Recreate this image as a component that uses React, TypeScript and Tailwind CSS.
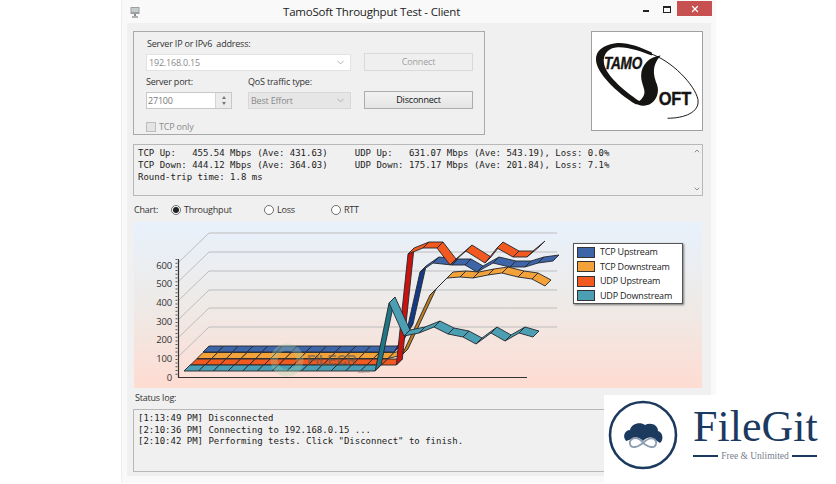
import { ChevronDown, ChevronUp, X } from "lucide-react";

type Pt = [number, number];

// front edge of every ribbon, page coordinates, back to front
const flat = (x0: number, y: number, n: number): Pt[] =>
  Array.from({ length: n + 1 }, (_, i) => [x0 + i * 14.7, y] as Pt);

const series: { name: string; light: string; dark: string; pts: Pt[] }[] = [
  {
    name: "TCP Upstream",
    light: "#3f65a9",
    dark: "#143a86",
    pts: [
      ...flat(203, 352, 13),
      [407, 330], [420, 272], [433, 263], [452, 265], [465, 265], [477, 272],
      [493, 263], [510, 267], [525, 267], [538, 263], [553, 261],
    ],
  },
  {
    name: "TCP Downstream",
    light: "#f3a23a",
    dark: "#bf7d20",
    pts: [
      ...flat(197, 358.5, 13),
      [402, 355], [430, 295], [447, 278], [460, 277], [473, 278], [488, 275],
      [502, 273], [518, 277], [532, 279], [545, 286],
    ],
  },
  {
    name: "UDP Upstream",
    light: "#f1591f",
    dark: "#c8140f",
    pts: [
      ...flat(190.5, 365, 14),
      [408, 254], [423, 248], [437, 248], [450, 265], [466, 251], [485, 263],
      [497, 248], [513, 257], [527, 257], [539, 247],
    ],
  },
  {
    name: "UDP Downstream",
    light: "#4c9fb2",
    dark: "#1f7785",
    pts: [
      ...flat(184, 371, 13),
      [389, 303], [404, 336], [419, 333], [434, 327], [448, 334], [463, 337],
      [476, 344], [491, 333], [505, 341], [519, 333], [533, 337],
    ],
  },
];

const Ribbon = ({ light, dark, pts }: { light: string; dark: string; pts: Pt[] }) => (
  <g stroke="#23272e" strokeWidth={0.9} strokeLinejoin="round">
    {pts.slice(0, -1).map(([x1, y1], i) => {
      const [x2, y2] = pts[i + 1];
      const steep = (y2 - y1) / (x2 - x1) < -1.6;
      return (
        <polygon
          key={i}
          fill={steep ? dark : light}
          points={`${x1},${y1} ${x2},${y2} ${x2 + 6},${y2 - 6} ${x1 + 6},${y1 - 6}`}
        />
      );
    })}
  </g>
);

const Chart = () => {
  const backLines = [233, 252, 271, 290, 308, 327];
  const labels = [
    ["600", 265], ["500", 283.5], ["400", 302], ["300", 321], ["200", 339.5], ["100", 358], ["0", 377],
  ] as const;
  return (
    <svg viewBox="134 222 568 166" className="block w-[568px] h-[166px]">
      {backLines.map((y) => (
        <g key={y} stroke="#bdbdbd" strokeWidth={1} fill="none">
          <path d={`M178 ${y + 30} L209 ${y} H557`} />
        </g>
      ))}
      <path d="M178.5 259 V377.5 H527" stroke="#333" strokeWidth={1.2} fill="none" />
      <path d="M176.5 259 V377" stroke="#555" strokeWidth={2} strokeDasharray="1 2.7" fill="none" />
      {labels.map(([t, y]) => (
        <text key={t} x={172} y={y + 3.5} textAnchor="end" fontSize={9.5} fill="#333" className="font-['Open_Sans',sans-serif]">
          {t}
        </text>
      ))}
      {series.map((s) => (
        <Ribbon key={s.name} light={s.light} dark={s.dark} pts={s.pts} />
      ))}
      {/* site watermark in the shot */}
      <circle cx={287} cy={360} r={13} fill="none" stroke="#a8d4ae" strokeWidth={7} opacity={0.3} />
      <text x={307} y={365} fontSize={14} fontWeight={700} fill="#5e5a52" opacity={0.6} className="font-['Liberation_Sans',sans-serif]">
        FILECR
      </text>
      <text x={357} y={373} fontSize={6} fill="#666" opacity={0.7} className="font-['Liberation_Sans',sans-serif]">
        .com
      </text>
    </svg>
  );
};

const Radio = ({ label, checked, className }: { label: string; checked?: boolean; className: string }) => (
  <div className={`flex items-center gap-[3px] ${className}`}>
    <span className="w-[10px] h-[10px] rounded-full border border-[#6f6f6f] bg-white flex items-center justify-center">
      {checked && <span className="w-[6px] h-[6px] rounded-full bg-[#222]" />}
    </span>
    <span>{label}</span>
  </div>
);

const TamoLogo = () => (
  <svg viewBox="591 31 112 100" className="block w-full h-full">
    <path d="M652 52 C640 46 625 41 615 42.5 C603 44 594 50 595 60 C596 73 615 92 636 105 L640 102 C622 90 604 74 603 62 C602 53 608 47 617 46.5 C628 46 642 51 652 55 Z" fill="#161412" />
    <path d="M661 55 C650 56 641 64 641 76 C641 84 646 90 644 95 C642 100 638 103 634 103 C638 107 647 107 651 104 C657 100 660 92 657 84 C654 76 651 66 661 55 Z" fill="#161412" />
    <path d="M650 53 C672 60 696 85 699 100 C701 113 685 119 668 119" stroke="#161412" strokeWidth={1} fill="none" />
    <text x={603} y={69} fontSize={16} fontWeight={700} fontStyle="italic" textLength={39} lengthAdjust="spacingAndGlyphs" fill="#161412" stroke="#161412" strokeWidth={0.4} className="font-['Liberation_Sans',sans-serif]">
      TAMO
    </text>
    <text x={659} y={106} fontSize={19} fontWeight={700} textLength={33} lengthAdjust="spacingAndGlyphs" fill="#161412" stroke="#161412" strokeWidth={0.4} className="font-['Liberation_Sans',sans-serif]">
      OFT
    </text>
  </svg>
);

const FileGitBadge = () => (
  <div className="absolute left-[604px] top-[395px] w-[232px] h-[89px] bg-white flex">
    <svg viewBox="604 395 76 89" className="w-[76px] h-[89px] shrink-0">
      <circle cx={643} cy={435} r={33} fill="none" stroke="#1c3a5e" strokeWidth={2.6} />
      <path d="M626 441 C622 436 625 430 630 430 C631 424 640 421 645 425 C651 422 658 425 658 431 C663 432 664 440 660 443 L654 439 C650 436 646 438 643 441 C640 438 636 436 632 439 Z" fill="#1c3a5e" />
      <path d="M643 443 C640 438 635 437 632 439 C628 442 630 448 635 447 C638 447 640 445 643 443 C646 440 650 437 654 439 C658 442 656 448 651 447 C648 447 646 445 643 443 Z" fill="none" stroke="#8d9db0" strokeWidth={1.8} />
    </svg>
    <div className="ml-[13px] w-[124px] text-[#1b3a61]">
      <div className="mt-[9px] text-[44px] leading-[46px] font-['Liberation_Serif',serif] whitespace-nowrap">FileGit</div>
      <div className="mt-[1px] flex items-center gap-[3px]">
        <span className="h-[2px] flex-1 bg-[#1b3a61]" />
        <span className="text-[9.5px] leading-[10px] text-[#77808c] font-['Liberation_Serif',serif] whitespace-nowrap">Free &amp; Unlimited</span>
        <span className="h-[2px] flex-1 bg-[#1b3a61]" />
      </div>
    </div>
  </div>
);

export default function App() {
  const ui = "font-['Open_Sans',sans-serif] text-[9px] leading-[12px] tracking-[-0.2px] text-[#333]";
  const mono = "font-['DejaVu_Sans_Mono',monospace] text-[9px] leading-[12px] tracking-normal text-[#222] whitespace-pre";

  return (
    <div className="relative w-[836px] h-[484px] bg-white overflow-hidden">
      <div className={`ml-[121px] w-[595px] h-[483px] bg-[#f9f9f9] border-l border-[#eeeeee] ${ui}`}>
        {/* title bar */}
        <div className="h-[23px] flex items-start relative">
          <svg viewBox="0 0 10 11" className="ml-[8px] mt-[7px] w-[10px] h-[11px]">
            <rect x={0.5} y={0} width={9} height={7} fill="#9aa0a0" />
            <rect x={1.5} y={1} width={7} height={4} fill="#c6cccc" />
            <rect x={4} y={7} width={2} height={2} fill="#8a8a8a" />
            <rect x={2} y={9} width={6} height={2} fill="#b0b0b0" />
          </svg>
          <div className="ml-[143px] mt-[3px] text-[11.5px] leading-[18px] text-[#222] whitespace-nowrap">TamoSoft Throughput Test - Client</div>
          <div className="ml-auto mr-[4px] flex items-start">
            <span className="mt-[10px] w-[6px] h-[2px] bg-[#222]" />
            <span className="ml-[14px] mt-[6px] w-[8px] h-[7px] border border-[#222] border-t-2" />
            <span className="ml-[6px] mt-[1px] w-[35px] h-[15px] bg-[#c75050] flex items-center justify-center">
              <X size={10} strokeWidth={3} className="text-white" />
            </span>
          </div>
        </div>

        {/* client area */}
        <div className="ml-[5px] w-[584px] h-[453px] bg-[#f0f0f0] pt-[8px] pl-[6px]">
          <div className="flex items-start">
            <div className="w-[352px] h-[104px] border border-[#a9a9a9] pl-[12px] flex">
              <div className="w-[205px]">
                <div className="mt-[6px] ml-[1px] h-[12px] whitespace-pre">Server IP or IPv6  address:</div>
                <div className="mt-[4px] h-[17px] bg-white border border-[#e2e2e2] flex items-center pl-[2px] pr-[4px] text-[#8a8a8a]">
                  <span>192.168.0.15</span>
                  <ChevronDown size={11} className="ml-auto text-[#aaaaaa]" />
                </div>
                <div className="mt-[5px] flex">
                  <div className="w-[86px]">
                    <div className="h-[12px]">Server port:</div>
                    <div className="mt-[4px] h-[17px] bg-white border border-[#c8c8c8] flex items-center pl-[1px] text-[#777]">
                      <span>27100</span>
                      <div className="ml-auto w-[16px] h-full bg-[#ececec] border-l border-[#d5d5d5] flex flex-col items-center justify-center gap-[3px]">
                        <span className="w-0 h-0 border-x-[2.5px] border-x-transparent border-b-[3px] border-b-[#777]" />
                        <span className="w-0 h-0 border-x-[2.5px] border-x-transparent border-t-[3px] border-t-[#777]" />
                      </div>
                    </div>
                  </div>
                  <div className="ml-[16px] w-[103px]">
                    <div className="h-[12px]">QoS traffic type:</div>
                    <div className="mt-[4px] h-[17px] bg-[#e6e6e6] border border-[#d8d8d8] flex items-center pl-[2px] pr-[4px] text-[#8a8a8a]">
                      <span>Best Effort</span>
                      <ChevronDown size={11} className="ml-auto text-[#aaaaaa]" />
                    </div>
                  </div>
                </div>
                <div className="mt-[12px] flex items-center gap-[3px] text-[#8c8c8c]">
                  <span className="w-[10px] h-[10px] border border-[#bdbdbd] bg-[#e4e4e4]" />
                  <span>TCP only</span>
                </div>
              </div>
              <div className="ml-[13px] w-[109px]">
                <div className="mt-[21px] h-[18px] bg-[#efefef] border border-[#d9d9d9] flex items-center justify-center text-[#a0a0a0]">Connect</div>
                <div className="mt-[20px] h-[18px] bg-gradient-to-b from-[#f2f2f2] to-[#e4e4e4] border border-[#acacac] flex items-center justify-center text-[#111]">Disconnect</div>
              </div>
            </div>
            <div className="ml-[106px] w-[112px] h-[100px] bg-white border border-[#a0a0a0]">
              <TamoLogo />
            </div>
          </div>

          {/* live stats */}
          <div className={`mt-[9px] w-[570px] h-[52px] border border-[#b8b8b8] flex ${mono}`}>
            <div className="flex-1 pl-[4px] pt-[2px]">
              <div>TCP Up:   455.54 Mbps (Ave: 431.63)     UDP Up:   631.07 Mbps (Ave: 543.19), Loss: 0.0%</div>
              <div>TCP Down: 444.12 Mbps (Ave: 364.03)     UDP Down: 175.17 Mbps (Ave: 201.84), Loss: 7.1%</div>
              <div>Round-trip time: 1.8 ms</div>
            </div>
            <div className="w-[11px] flex flex-col items-center justify-between py-[2px] text-[#777]">
              <ChevronUp size={8} strokeWidth={2.5} />
              <ChevronDown size={8} strokeWidth={2.5} />
            </div>
          </div>

          {/* chart selector */}
          <div className="mt-[8px] h-[12px] flex items-center">
            <span className="ml-[1px] w-[37px]">Chart:</span>
            <Radio label="Throughput" checked className="w-[93px]" />
            <Radio label="Loss" className="w-[67px]" />
            <Radio label="RTT" className="" />
          </div>

          <div className="relative mt-[6px] ml-[1px] w-[568px] h-[166px] bg-gradient-to-b from-[#e8f1fc] via-[#eeeae7] to-[#fedcd2]">
            <Chart />
            <div className="absolute left-[439px] top-[21px] w-[110px] h-[61px] bg-white border border-[#555] shadow-[1px_1px_2px_#777] pl-[3px] pt-[2px] flex flex-col gap-[2px]">
              {series.map((s) => (
                <div key={s.name} className="h-[12.5px] flex items-center gap-[5px] text-[#222]">
                  <span className="w-[18px] h-[11px] border border-[#333]" style={{ backgroundColor: s.light }} />
                  <span className="whitespace-nowrap">{s.name}</span>
                </div>
              ))}
            </div>
          </div>

          <div className="mt-[4px] ml-[2px] h-[12px]">Status log:</div>
          <div className={`mt-[5px] w-[570px] h-[63px] border border-[#b8b8b8] pl-[4px] pt-[3px] !leading-[11.7px] ${mono}`}>
            <div>[1:13:49 PM] Disconnected</div>
            <div>[2:10:36 PM] Connecting to 192.168.0.15 ...</div>
            <div>[2:10:42 PM] Performing tests. Click "Disconnect" to finish.</div>
          </div>
        </div>
      </div>

      <FileGitBadge />
    </div>
  );
}
